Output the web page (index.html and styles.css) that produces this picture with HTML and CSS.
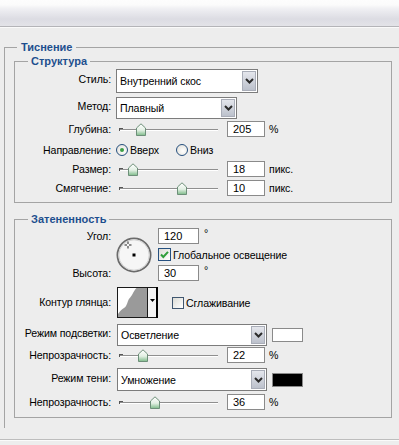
FILE: index.html
```html
<!DOCTYPE html>
<html lang="ru">
<head>
  <meta charset="UTF-8">
  <meta name="viewport" content="width=device-width, initial-scale=1.0">
  <title>Тиснение</title>
  <link rel="stylesheet" href="styles.css">
</head>
<body>

  <div class="topbar"></div>

  <fieldset class="group outer">
    <legend>Тиснение</legend>

    <!-- Структура -->
    <fieldset class="group inner">
      <legend>Структура</legend>

      <div class="row r-style">
        <span class="label up">Стиль:</span>
        <div class="select s-style">
          <span class="value">Внутренний скос</span>
          <span class="arrow"><svg width="9" height="6" viewBox="0 0 9 6"><path d="M1 1l3.5 3.5L8 1" fill="none" stroke="#2b2b2b" stroke-width="2"/></svg></span>
        </div>
      </div>

      <div class="row r-method">
        <span class="label up">Метод:</span>
        <div class="select s-method">
          <span class="value">Плавный</span>
          <span class="arrow"><svg width="9" height="6" viewBox="0 0 9 6"><path d="M1 1l3.5 3.5L8 1" fill="none" stroke="#2b2b2b" stroke-width="2"/></svg></span>
        </div>
      </div>

      <div class="row r-slider gap2">
        <span class="label">Глубина:</span>
        <div class="slider">
          <span class="track"></span>
          <svg class="thumb" style="left: 25px" width="10" height="13" viewBox="0 0 10 13">
            <defs>
              <linearGradient id="thumbFill" x1="0" y1="0" x2="0" y2="1">
                <stop offset="0" stop-color="#ffffff"/>
                <stop offset="0.55" stop-color="#e2efe3"/>
                <stop offset="1" stop-color="#7dbb89"/>
              </linearGradient>
            </defs>
            <path d="M0.5 12.5V5L5 0.8 9.5 5v7.5z" fill="url(#thumbFill)" stroke="#6d8f79"/>
          </svg>
        </div>
        <input class="num" type="text" value="205">
        <span class="unit">%</span>
      </div>

      <div class="row r-slider gap5">
        <span class="label">Направление:</span>
        <span class="radio on"></span><span class="opt">Вверх</span>
        <span class="radio second"></span><span class="opt">Вниз</span>
      </div>

      <div class="row r-slider gap3">
        <span class="label">Размер:</span>
        <div class="slider">
          <span class="track"></span>
          <svg class="thumb" style="left: 17px" width="10" height="13" viewBox="0 0 10 13"><path d="M0.5 12.5V5L5 0.8 9.5 5v7.5z" fill="url(#thumbFill)" stroke="#6d8f79"/></svg>
        </div>
        <input class="num" type="text" value="18">
        <span class="unit">пикс.</span>
      </div>

      <div class="row r-slider gap3">
        <span class="label">Смягчение:</span>
        <div class="slider">
          <span class="track"></span>
          <svg class="thumb" style="left: 66px" width="10" height="13" viewBox="0 0 10 13"><path d="M0.5 12.5V5L5 0.8 9.5 5v7.5z" fill="url(#thumbFill)" stroke="#6d8f79"/></svg>
        </div>
        <input class="num" type="text" value="10">
        <span class="unit">пикс.</span>
      </div>
    </fieldset>

    <!-- Затененность -->
    <fieldset class="group inner shading">
      <legend>Затененность</legend>

      <div class="angle">
        <span class="label a-top">Угол:</span>
        <svg class="dial" width="36" height="36" viewBox="0 0 36 36">
          <circle cx="18" cy="18" r="16.6" fill="#f6f6f6" stroke="#6b6b6b" stroke-width="1.8"/>
          <circle cx="18" cy="18" r="15.2" fill="none" stroke="#d4d4d4" stroke-width="1"/>
          <path d="M12 4.5v2.5M12 9v2.5M8.5 8h2.5M13 8h2.5" stroke="#222" stroke-width="1"/>
          <rect x="16.5" y="16.5" width="3" height="3" fill="#000"/>
        </svg>
        <div class="a-field a-top">
          <input class="num deg" type="text" value="120">
          <span class="degree">°</span>
        </div>
        <div class="a-field a-mid">
          <span class="check on">
            <svg width="11" height="11" viewBox="0 0 11 11"><path d="M2 5.5l2.3 2.5L9 2.8" fill="none" stroke="#2f9e3a" stroke-width="2"/></svg>
          </span>
          <span class="opt">Глобальное освещение</span>
        </div>
        <span class="label a-bot">Высота:</span>
        <div class="a-field a-bot">
          <input class="num deg" type="text" value="30">
          <span class="degree">°</span>
        </div>
      </div>

      <div class="row r-contour">
        <span class="label">Контур глянца:</span>
        <svg class="contour" width="41" height="31" viewBox="0 0 41 31">
          <rect x="0.5" y="0.5" width="40" height="30" fill="#fff" stroke="#1a1a1a"/>
          <path d="M1 30V27C3 24 5 22 7 21C9 20 10 17 11 14C12 11 14 10 15 8C16 6 17 4 18.5 2L19.5 1H30V30Z" fill="#9a9a9a"/>
          <line x1="30.5" y1="1" x2="30.5" y2="30" stroke="#1a1a1a"/>
          <rect x="31" y="1" width="8.5" height="29" fill="#f4f4f4"/>
          <line x1="40" y1="0" x2="40" y2="31" stroke="#000" stroke-width="2"/>
          <path d="M33 12h5l-2.5 3z" fill="#000"/>
        </svg>
        <span class="check small"></span>
        <span class="opt">Сглаживание</span>
      </div>

      <div class="row r-highlight">
        <span class="label up">Режим подсветки:</span>
        <div class="select s-mode">
          <span class="value">Осветление</span>
          <span class="arrow"><svg width="9" height="6" viewBox="0 0 9 6"><path d="M1 1l3.5 3.5L8 1" fill="none" stroke="#2b2b2b" stroke-width="2"/></svg></span>
        </div>
        <span class="swatch white"></span>
      </div>

      <div class="row r-slider gap1">
        <span class="label">Непрозрачность:</span>
        <div class="slider">
          <span class="track"></span>
          <svg class="thumb" style="left: 27px" width="10" height="13" viewBox="0 0 10 13"><path d="M0.5 12.5V5L5 0.8 9.5 5v7.5z" fill="url(#thumbFill)" stroke="#6d8f79"/></svg>
        </div>
        <input class="num" type="text" value="22">
        <span class="unit">%</span>
      </div>

      <div class="row r-shadow">
        <span class="label up">Режим тени:</span>
        <div class="select s-mode">
          <span class="value">Умножение</span>
          <span class="arrow"><svg width="9" height="6" viewBox="0 0 9 6"><path d="M1 1l3.5 3.5L8 1" fill="none" stroke="#2b2b2b" stroke-width="2"/></svg></span>
        </div>
        <span class="swatch black"></span>
      </div>

      <div class="row r-slider gap3">
        <span class="label">Непрозрачность:</span>
        <div class="slider">
          <span class="track"></span>
          <svg class="thumb" style="left: 39px" width="10" height="13" viewBox="0 0 10 13"><path d="M0.5 12.5V5L5 0.8 9.5 5v7.5z" fill="url(#thumbFill)" stroke="#6d8f79"/></svg>
        </div>
        <input class="num" type="text" value="36">
        <span class="unit">%</span>
      </div>
    </fieldset>
  </fieldset>

  <div class="footer"></div>

</body>
</html>
```

FILE: styles.css
```css
body {
  margin: 0;
  width: 399px;
  height: 445px;
  overflow: hidden;
  background: #ededed;
  font-family: "Liberation Sans", Arial, sans-serif;
  font-size: 10.6px;
  letter-spacing: -0.1px;
  color: #000;
}

.topbar {
  height: 26px;
  border-bottom: 1px solid #b4b4b8;
  box-shadow: 0 1px 0 #fafafa;
  background: linear-gradient(to bottom, #fdfdfd 0, #fbfbfb 5px, #f1f1f4 8px, #dcdce3 19px, #e3e3e8 26px);
}

/* group boxes */
.group {
  border: 1px solid #a4a4a4;
  margin: 0;
  padding: 0;
  min-inline-size: 0;
}

.group legend {
  font-size: 11px;
  letter-spacing: 0;
  font-weight: bold;
  color: #1d4f8e;
  line-height: 14px;
  padding: 0 4px;
  margin-left: 3px;
}

.outer {
  margin: 13px 0 0 4px;
  width: 395px;
  box-sizing: border-box;
  border-right: none;
  border-bottom: none;
  padding: 0 0 10px 9px;
}

.inner {
  width: 378px;
  box-sizing: border-box;
  padding: 0 0 6px 0;
}

.inner legend {
  padding: 0 3px;
  margin-left: 13px;
}

.shading {
  margin-top: 9px;
  padding-bottom: 7px;
}

/* rows */
.row {
  display: flex;
  align-items: center;
}

.label {
  width: 96px;
  flex: none;
  margin-right: 5px;
  text-align: right;
  white-space: nowrap;
  line-height: 13px;
}

.label.up {
  margin-bottom: 3px;
}

.r-style { margin-top: 1px; height: 24px; }
.r-method { margin-top: 4px; height: 22px; }
.r-slider { height: 16px; }
.gap1 { margin-top: 1px; }
.gap2 { margin-top: 2px; }
.gap3 { margin-top: 3px; }
.gap5 { margin-top: 5px; }
.r-contour { margin-top: 6px; height: 31px; }
.r-highlight { margin-top: 6px; height: 22px; }
.r-shadow { margin-top: 5px; height: 23px; }

/* dropdowns */
.select {
  display: flex;
  align-items: center;
  height: 100%;
  box-sizing: border-box;
  border: 1px solid #7c7c7c;
  background: #fff;
  flex: none;
}

.select .value {
  flex: 1;
  padding-left: 3px;
  white-space: nowrap;
}

.select .arrow {
  align-self: stretch;
  width: 14px;
  margin: 1px;
  display: flex;
  align-items: center;
  justify-content: center;
  background: linear-gradient(to bottom, #e4e6ec, #bcc1cc);
  border: 1px solid #a9adb8;
  box-sizing: border-box;
}

.s-style { width: 142px; }
.s-method { width: 121px; }
.s-mode { width: 150px; margin-left: 1px; }

/* sliders */
.slider {
  position: relative;
  width: 106px;
  height: 16px;
  flex: none;
}

.track {
  position: absolute;
  left: 4px;
  right: 4px;
  top: 8px;
  height: 1px;
  background: #8f8f8f;
  border-bottom: 1px solid #fff;
}

.track::before {
  content: "";
  position: absolute;
  left: -1px;
  top: -1px;
  width: 3px;
  height: 2px;
  border-top: 1px solid #555;
  border-left: 1px solid #555;
}

.thumb {
  position: absolute;
  top: 2px;
  transform: translateX(-50%);
}

.num {
  width: 38px;
  height: 16px;
  box-sizing: border-box;
  margin: 0 0 0 5px;
  padding: 0 0 0 5px;
  border: 1px solid #8a8a8a;
  background: #fff;
  font-family: inherit;
  font-size: 11px;
  color: #000;
  line-height: 14px;
  outline: none;
}

.unit {
  margin-left: 4px;
}

/* radios and checks */
.radio {
  width: 12px;
  height: 12px;
  box-sizing: border-box;
  border: 1px solid #26507f;
  border-radius: 50%;
  background: radial-gradient(circle at 60% 60%, #ffffff, #dedcd4);
  display: flex;
  align-items: center;
  justify-content: center;
  flex: none;
}

.radio.on::after {
  content: "";
  width: 4px;
  height: 4px;
  border-radius: 50%;
  background: #3c9e46;
}

.radio.second {
  margin-left: 17px;
}

.opt {
  margin-left: 2px;
  white-space: nowrap;
}

.check {
  width: 13px;
  height: 13px;
  box-sizing: border-box;
  border: 1px solid #26507f;
  background: linear-gradient(135deg, #dcdcd6, #ffffff);
  display: flex;
  align-items: center;
  justify-content: center;
  flex: none;
}

.check.small {
  width: 12px;
  height: 12px;
  margin-left: 14px;
  border-color: #40566f;
}

/* angle block */
.angle {
  margin-top: 2px;
  display: grid;
  grid-template-columns: 96px 36px auto;
  grid-template-rows: 16px 13px 16px;
  row-gap: 4px;
  align-items: center;
}

.angle .label {
  grid-column: 1;
  margin-right: 0;
}

.a-top { grid-row: 1; }
.a-mid { grid-row: 2; }
.a-bot { grid-row: 3; }

.dial {
  grid-column: 2;
  grid-row: 1 / 4;
  margin-left: 5px;
}

.a-field {
  grid-column: 3;
  margin-left: 11px;
  display: flex;
  align-items: center;
  height: 100%;
}

.a-field .num {
  margin-left: 0;
}

.num.deg {
  width: 41px;
}

.degree {
  align-self: flex-start;
  margin-left: 5px;
  line-height: 10px;
}

.contour {
  margin-left: 1px;
  flex: none;
}

/* colour swatches */
.swatch {
  width: 31px;
  height: 14px;
  box-sizing: border-box;
  margin-left: 5px;
  border: 1px solid #8a8a8a;
  flex: none;
}

.swatch.white { background: #fff; }
.swatch.black { background: #000; }

.footer {
  margin-top: 11px;
  height: 6px;
  border-top: 1px solid #bdbdbd;
  box-shadow: inset 0 1px 0 #fafafa;
}
```
